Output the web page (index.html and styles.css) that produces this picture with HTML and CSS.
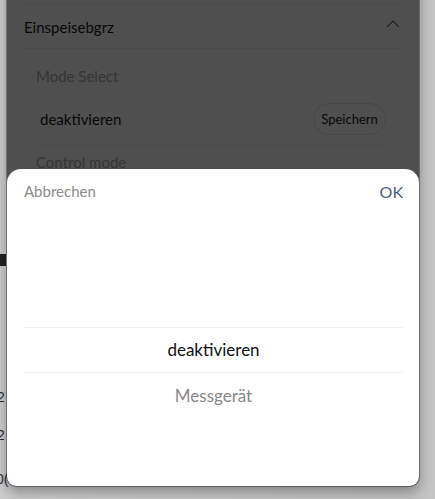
FILE: index.html
```html
<!DOCTYPE html>
<html lang="de">
<head>
<meta charset="utf-8">
<link rel="stylesheet" href="styles.css">
</head>
<body>
<div class="page">
  <div class="page-frag frag-bar"></div>
  <div class="page-frag frag-t1">2</div>
  <div class="page-frag frag-t2">2</div>
  <div class="page-frag frag-t3">0(</div>
</div>

<div class="window">
  <div class="content">
    <div class="section-head">
      <span class="section-title">Einspeisebgrz</span>
      <svg class="chev" width="14" height="8" viewBox="0 0 14 8"><path d="M1 7 L7 1 L13 7" fill="none" stroke="#333" stroke-width="1"/></svg>
    </div>
    <div class="label label-first">Mode Select</div>
    <div class="value-row">
      <span class="value">deaktivieren</span>
      <button class="pill">Speichern</button>
    </div>
    <div class="label">Control mode</div>
  </div>
  <div class="dim"></div>

  <div class="sheet">
    <div class="sheet-head">
      <span class="cancel">Abbrechen</span>
      <span class="ok">OK</span>
    </div>
    <div class="picker">
      <div class="picker-item selected">deaktivieren</div>
      <div class="picker-item">Messgerät</div>
    </div>
  </div>
</div>
</body>
</html>
```
FILE: styles.css
```css
html, body {
  margin: 0;
  padding: 0;
}
body {
  width: 435px;
  height: 499px;
  overflow: hidden;
  background: #c9c9c9;
  font-family: Lato, "Noto Sans", sans-serif;
  position: relative;
}
.page {
  position: absolute;
  inset: 0;
  background: linear-gradient(to right, #cdcdcd 0, #c4c4c4 100%);
}
.page-frag {
  position: absolute;
  font-family: "Liberation Sans", sans-serif;
  font-size: 14px;
  color: #2b2b38;
}
.frag-bar { left: 0; top: 254px; width: 6px; height: 12px; background: #222; }
.frag-t1 { left: -3px; top: 389px; }
.frag-t2 { left: -3px; top: 427px; }
.frag-t3 { left: -4px; top: 471px; }

.window {
  position: absolute;
  left: 7px;
  top: -20px;
  width: 412px;
  height: 506px;
  background: #fff;
  border-radius: 0 0 9px 9px;
  box-shadow: 0 6px 14px rgba(0,0,0,.35), 0 0 0 1px rgba(0,0,0,.35);
  overflow: hidden;
}
.content {
  padding: 24px 16px 0 17px;
  color: #1a1a1a;
}
.section-head {
  height: 43px;
  border-top: 1px solid #ececec;
  border-bottom: 1px solid #ececec;
  display: flex;
  align-items: center;
  justify-content: space-between;
  padding-right: 3px;
}
.section-title {
  font-size: 15px;
}
.chev { margin-top: -5px; }
.label {
  font-size: 15px;
  color: #aaa;
  padding-left: 12px;
  height: 32px;
  line-height: 32px;
}
.label-first {
  margin-top: 11px;
}
.value-row {
  margin: 0 16px 0 16px;
  height: 53px;
  display: flex;
  align-items: center;
  justify-content: space-between;
  border-bottom: 1px solid #ececec;
}
.value {
  font-size: 15px;
}
.pill {
  font-family: inherit;
  font-size: 13px;
  color: #1a1a1a;
  background: #fff;
  border: 1px solid #e2e2e2;
  border-radius: 16px;
  height: 32px;
  width: 73px;
  padding: 0;
  margin-right: 1px;
}
.dim {
  position: absolute;
  inset: 0;
  background: rgba(0,0,0,.69);
}
.sheet {
  position: absolute;
  left: 0;
  right: 0;
  bottom: 0;
  height: 317px;
  background: #fff;
  border-radius: 14px 14px 9px 9px;
}
.sheet-head {
  height: 44px;
  display: flex;
  align-items: center;
  justify-content: space-between;
  padding: 0 16px 0 17px;
  font-size: 15px;
}
.cancel { color: #8c8c8c; }
.ok { color: #4b5b90; font-size: 16px; }
.picker {
  padding: 114px 16px 0 17px;
}
.picker-item {
  height: 45px;
  line-height: 45px;
  text-align: center;
  font-size: 17px;
  color: #888;
}
.picker-item.selected {
  color: #111;
  border-top: 1px solid #f0f0f0;
  border-bottom: 1px solid #f0f0f0;
  height: 44px;
  line-height: 44px;
}
```
